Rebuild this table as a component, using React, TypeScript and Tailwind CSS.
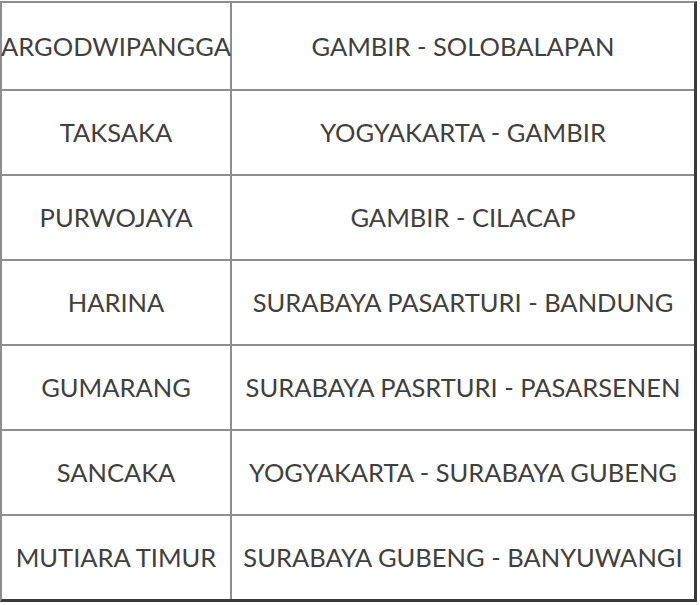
import React from "react";

const rows: [string, string][] = [
  ["ARGODWIPANGGA", "GAMBIR - SOLOBALAPAN"],
  ["TAKSAKA", "YOGYAKARTA - GAMBIR"],
  ["PURWOJAYA", "GAMBIR - CILACAP"],
  ["HARINA", "SURABAYA PASARTURI - BANDUNG"],
  ["GUMARANG", "SURABAYA PASRTURI - PASARSENEN"],
  ["SANCAKA", "YOGYAKARTA - SURABAYA GUBENG"],
  ["MUTIARA TIMUR", "SURABAYA GUBENG - BANYUWANGI"],
];

export default function App() {
  return (
    <div className="w-[700px] h-[605px] bg-white pt-px" style={{ fontFamily: "Lato, 'Open Sans', sans-serif" }}>
      <div className="w-[697px] flex flex-col border-t-2 border-l-2 border-t-[#8e8e8e] border-l-[#8e8e8e] border-r-[3px] border-b-[3px] border-r-[#3a3a3a] border-b-[#3a3a3a] text-[#404040] text-[25.5px]">
        {rows.map(([a, b], i) => (
          <div
            key={i}
            className={`flex ${i === 0 ? "h-[86px]" : "h-[83px]"} ${i < rows.length - 1 ? "box-content border-b-2 border-b-[#8e8e8e]" : ""}`}
          >
            <div className="w-[228px] shrink-0 flex items-center justify-center whitespace-nowrap border-r-2 border-r-[#8e8e8e] box-content">
              {a}
            </div>
            <div className="flex-1 flex items-center justify-center whitespace-nowrap">{b}</div>
          </div>
        ))}
      </div>
    </div>
  );
}
